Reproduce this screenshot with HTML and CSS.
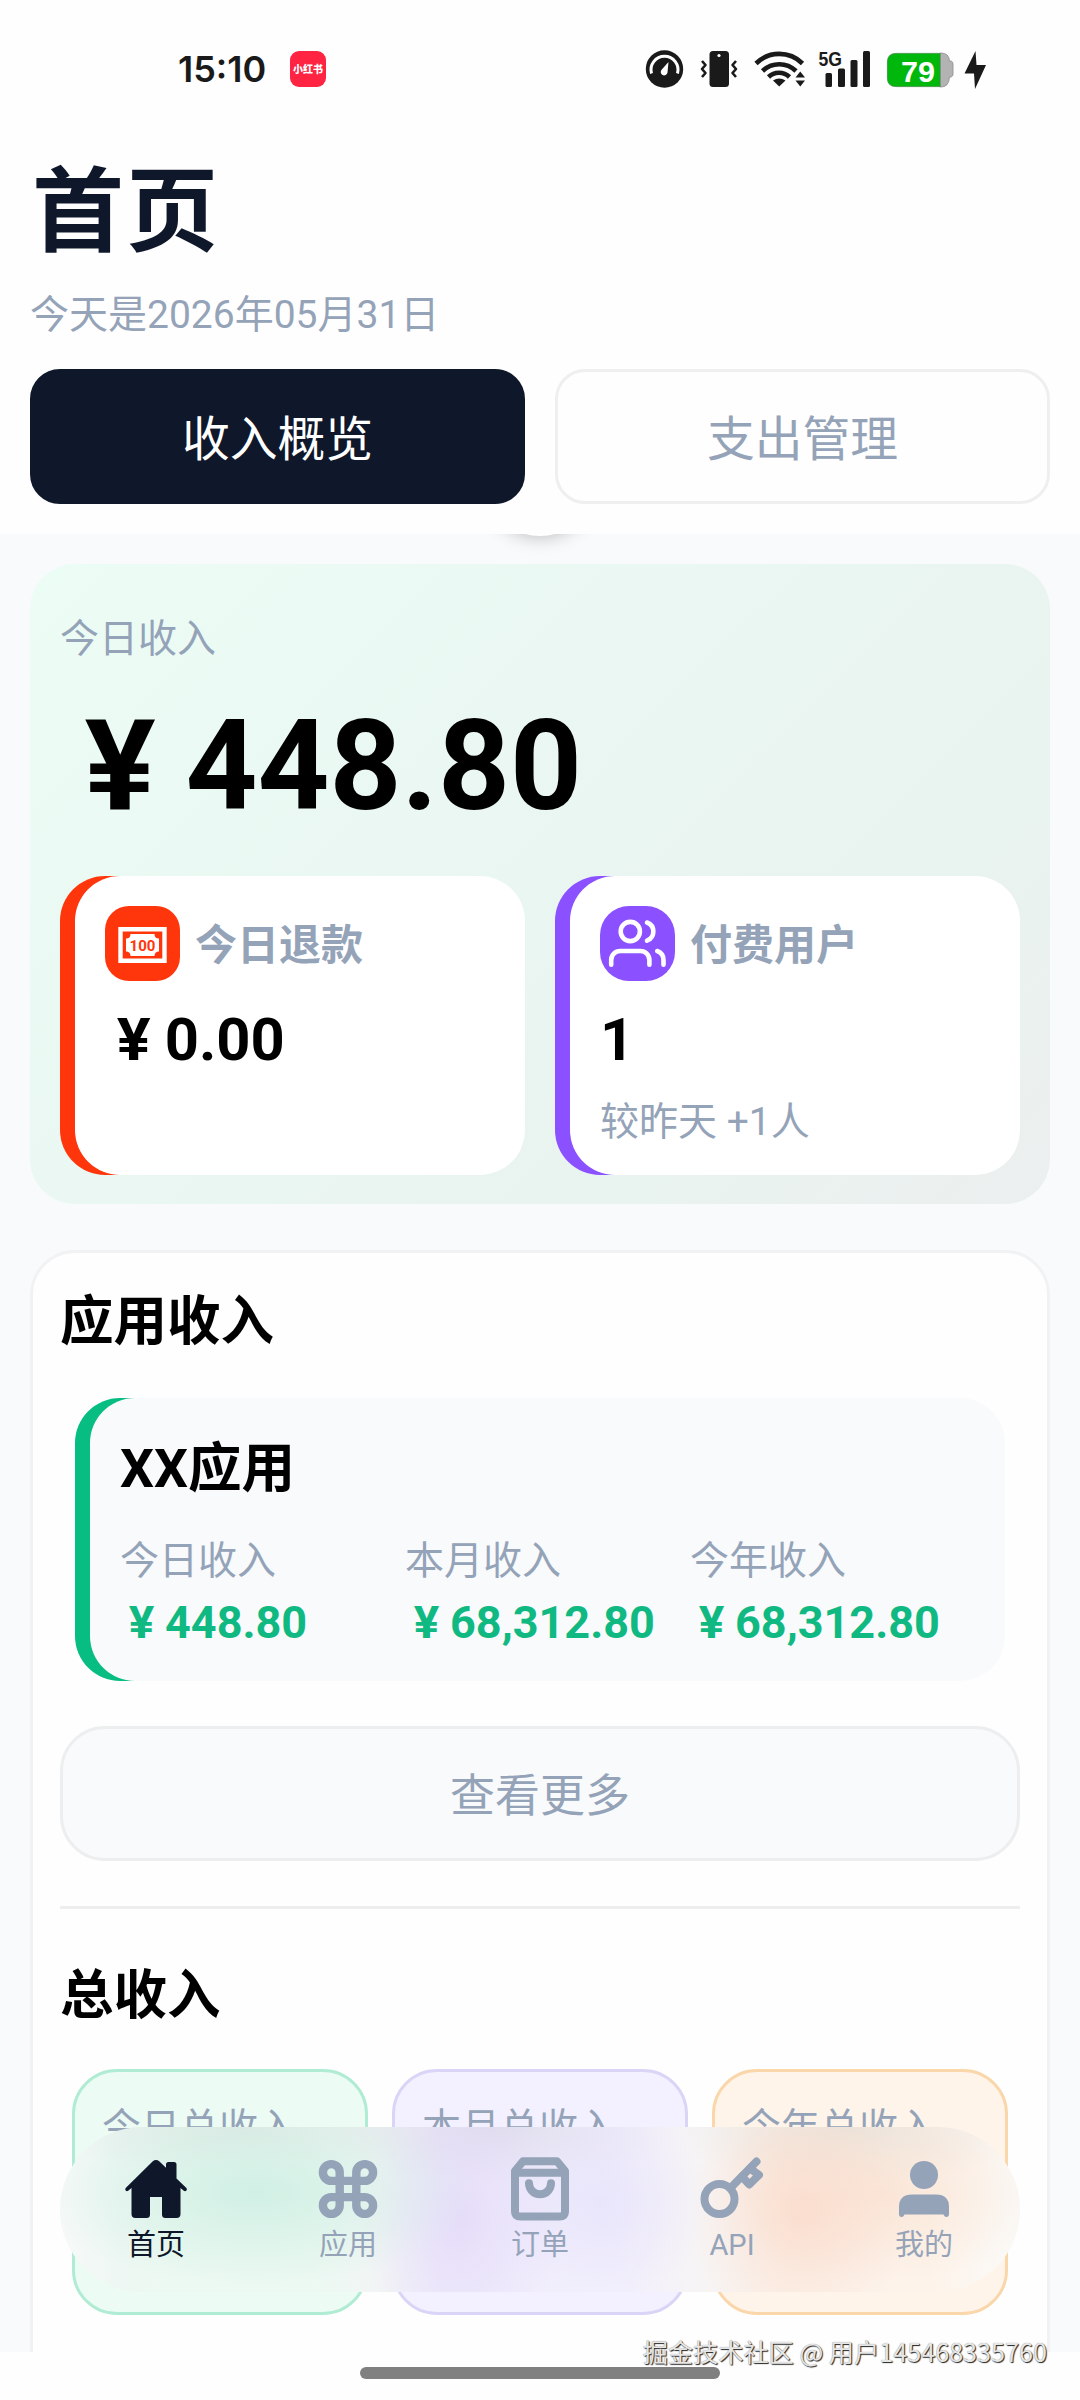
FILE: index.html
```html
<!DOCTYPE html>
<html lang="zh-CN">
<head>
<meta charset="utf-8">
<title>首页</title>
<link rel="stylesheet" href="styles.css">
</head>
<body>
<div class="screen">
  <div class="status">
    <div class="status-left">
      <span class="clock">15:10</span>
      <span class="app-badge">小红书</span>
    </div>
    <svg class="status-icons" width="344" height="60" viewBox="644 39 344 60">
      <g fill="#1a1a1a">
        <circle cx="664.5" cy="69" r="18.7"/>
        <path d="M651.5 73.500A13.500 13.500 0 1 1 677.500 73.500" fill="none" stroke="#fff" stroke-width="3"/>
        <path d="M668.500 62L667.500 72.500A3.400 3.400 0 1 1 661.800 69.500Z" fill="#fff"/>
        <rect x="709.500" y="51" width="19.500" height="36" rx="3.500"/>
        <circle cx="719" cy="55.500" r="1.600" fill="#fff"/>
        <path d="M702 61l3.500 4-3.500 4 3.500 4-3.500 4M736 61l-3.500 4 3.500 4-3.500 4 3.500 4" fill="none" stroke="#1a1a1a" stroke-width="2.600" stroke-linejoin="round"/>
        <g fill="none" stroke="#1a1a1a" stroke-width="4.600">
          <path d="M756 63.500a33 33 0 0 1 46.500 0"/>
          <path d="M762.500 71a24 24 0 0 1 33.500 0"/>
          <path d="M768.500 77a15 15 0 0 1 21 0"/>
        </g>
        <path d="M773 80.500q6-4 12.500 0L779.200 86.500Z"/>
        <path d="M795.500 77.500h9.500l-4.750-6zM795.500 80.500h9.500l-4.750 6z"/>
        <rect x="825.500" y="73" width="6.500" height="14" rx="1.500"/>
        <rect x="838" y="68.500" width="7" height="18.500" rx="1.500"/>
        <rect x="850.500" y="60" width="7" height="27" rx="1.500"/>
        <rect x="863" y="51" width="7" height="36" rx="1.500"/>
        <path d="M975.500 51L964.500 73.500h9.500L975 89 986 65h-9.500z"/>
      </g>
      <text class="net-label" x="818.500" y="65.500" textLength="23.500" lengthAdjust="spacingAndGlyphs">5G</text>
      <path d="M940 53h1q8 0 8.500 8h1.500q2 .5 2 3v10q0 2.500-2 3h-1.500q-.5 10-8.500 10h-1z" fill="#b3b3b3" stroke="#8a8f8a" stroke-width=".8"/>
      <path d="M940 53.400H896q-8.600 0-8.600 8.600v16q0 8.600 8.600 8.600h44z" fill="#00b70b" stroke="#3d8a41" stroke-width=".8"/>
      <text class="charge-label" x="901" y="81.500" textLength="34" lengthAdjust="spacingAndGlyphs">79</text>
    </svg>
  </div>

  <header class="header">
    <h1>首页</h1>
    <p class="date">今天是2026年05月31日</p>
    <div class="tabs">
      <div class="tab active">收入概览</div>
      <div class="tab">支出管理</div>
    </div>
  </header>

  <main class="main">
    <div class="refresh"></div>
    <section class="hero">
      <div class="label">今日收入</div>
      <div class="amount"><span class="yen">¥</span>448.80</div>
      <div class="pair">
        <div class="stat red">
          <div class="stat-body">
            <div class="stat-head">
              <svg class="stat-icon" width="75" height="75" viewBox="0 0 75 75">
                <rect width="75" height="75" rx="24" fill="#ff360b"/>
                <path d="M15.500 23.200h44v31.600h-44z" fill="none" stroke="#fff" stroke-width="4.400"/>
                <path d="M25.500 28h24q0 4.500 4.500 4.500v13q-4.500 0-4.500 4.500h-24q0-4.500-4.500-4.500v-13q4.500 0 4.500-4.500z" fill="#fff"/>
                <text class="note-label" x="37.500" y="44.600" text-anchor="middle">100</text>
              </svg>
              <span>今日退款</span>
            </div>
            <div class="stat-value"><span class="yen">¥</span>0.00</div>
          </div>
        </div>
        <div class="stat violet">
          <div class="stat-body">
            <div class="stat-head">
              <svg class="stat-icon" width="75" height="75" viewBox="0 0 75 75">
                <rect width="75" height="75" rx="29" fill="#8b50ff"/>
                <g fill="none" stroke="#fff" stroke-width="4.600" stroke-linecap="round">
                  <circle cx="30.300" cy="25.500" r="9.600"/>
                  <path d="M11.200 58.700V54a9 9 0 0 1 9-9h20.200a9 9 0 0 1 9 9v4.700"/>
                  <path d="M47 16.500a9.700 9.700 0 0 1 0 18.200"/>
                  <path d="M57.200 45c4 1.500 6.300 5 6.300 9v4.700"/>
                </g>
              </svg>
              <span>付费用户</span>
            </div>
            <div class="stat-value">1</div>
            <div class="stat-note">较昨天 +1人</div>
          </div>
        </div>
      </div>
    </section>

    <section class="panel">
      <h2>应用收入</h2>
      <div class="app">
        <div class="app-body">
          <h3>XX应用</h3>
          <div class="cols">
            <div><div class="label">今日收入</div><div class="money"><span class="yen">¥</span>448.80</div></div>
            <div><div class="label">本月收入</div><div class="money"><span class="yen">¥</span>68,312.80</div></div>
            <div><div class="label">今年收入</div><div class="money"><span class="yen">¥</span>68,312.80</div></div>
          </div>
        </div>
      </div>
      <div class="more">查看更多</div>
      <hr class="divider">
      <h2 class="total-title">总收入</h2>
      <div class="totals">
        <div class="total green">今日总收入</div>
        <div class="total purple">本月总收入</div>
        <div class="total orange">今年总收入</div>
      </div>
    </section>
  </main>

  <nav class="nav">
    <div class="nav-item current">
      <svg width="66" height="66" viewBox="0 0 66 66" fill="#0f172a">
        <path d="M33 4q-1.800 0-3.200 1.300L2.700 32q-1 1.200 0 2.500t2.500.3L8.500 32V58q0 4 4 4h11q3.500 0 3.500-3.500V41h12v17.500q0 3.500 3.500 3.500h11q4 0 4-4V32l3.300 2.800q1.500 1 2.600-.3t0-2.500L53.500 22.500V8.500q0-2.500-2.500-2.500h-5.500Q43 6 43 8.500v3.300L36.200 5.300Q34.800 4 33 4z"/>
      </svg>
      <span>首页</span>
    </div>
    <div class="nav-item">
      <svg width="66" height="66" viewBox="0 0 66 66" fill="none" stroke="#94a3b8" stroke-width="8.400">
        <path d="M24.700 16.500v33a8.400 8.400 0 1 1-8.400-8.400h33.400a8.400 8.400 0 1 1-8.400 8.400v-33a8.400 8.400 0 1 1 8.400 8.400H16.300a8.400 8.400 0 1 1 8.400-8.400z"/>
      </svg>
      <span>应用</span>
    </div>
    <div class="nav-item">
      <svg width="66" height="66" viewBox="0 0 66 66" fill="none" stroke="#94a3b8" stroke-width="8">
        <path d="M8 15v40.500q0 5 5.500 5h39q5.500 0 5.500-5V15L50 5.300H16z" stroke-linejoin="round"/>
        <path d="M8 16.700h50"/>
        <path d="M22 27.300a11 11 0 0 0 22 0" stroke-linecap="round"/>
      </svg>
      <span>订单</span>
    </div>
    <div class="nav-item">
      <svg width="66" height="66" viewBox="0 0 66 66" fill="none" stroke="#94a3b8" stroke-width="8" stroke-linecap="round" stroke-linejoin="round">
        <circle cx="20.500" cy="43" r="15"/>
        <path d="M31.500 32L57.500 5.500"/>
        <path d="M51 12.500L60 19 50.300 28.500 43 20.500"/>
      </svg>
      <span>API</span>
    </div>
    <div class="nav-item">
      <svg width="66" height="66" viewBox="0 0 66 66" fill="#94a3b8">
        <circle cx="33" cy="19" r="14"/>
        <path d="M8 51q0-12.500 13-12.500h24q13 0 13 12.500v7q0 3-2.700 3-1.800 0-2.800-2.500h-39q-1 2.500-2.800 2.500Q8 61 8 58z"/>
      </svg>
      <span>我的</span>
    </div>
  </nav>
  <div class="home-bar"></div>
  <div class="watermark">掘金技术社区 @ 用户145468335760</div>
</div>
</body>
</html>
```
FILE: styles.css
```css
* { box-sizing: border-box; margin: 0; padding: 0; }
body {
  background: #fff;
  font-family: Roboto, "Noto Sans CJK SC", sans-serif;
  font-size: 39px;
  color: #000;
}
h1, h2, h3 { font-weight: 700; }

.screen {
  position: relative;
  width: 1080px;
  height: 2400px;
  display: flex;
  flex-direction: column;
  background: #fefefe;
  overflow: hidden;
}

/* Status bar */
.status {
  height: 138px;
  display: flex;
  align-items: center;
  justify-content: space-between;
  padding: 0 92px 0 178px;
}
.status-left { display: flex; align-items: center; gap: 25px; }
.clock { font: 600 36px/40px Inter, sans-serif; color: #1a1a1a; width: 87px; white-space: nowrap; }
.app-badge {
  width: 36px;
  height: 36px;
  border-radius: 9px;
  background: #fe2442;
  color: #fff;
  font-size: 10px;
  font-weight: 900;
  line-height: 37px;
  text-align: center;
}
.net-label { font: 700 21px "Liberation Sans", sans-serif; fill: #1a1a1a; }
.charge-label { font: 700 30px "Liberation Sans", sans-serif; fill: #fff; }
.note-label { font: 700 15px Roboto, sans-serif; fill: #ff360b; }

/* Header */
.header { padding: 15px 30px 30px; }
h1 { padding-left: 2px; font-size: 92px; letter-spacing: 2px; line-height: 120px; color: #0f172a; }
.date { margin-top: 18px; line-height: 48px; color: #94a3b8; }
.tabs { margin-top: 30px; display: grid; grid-template-columns: 1fr 1fr; gap: 30px; }
.tab {
  height: 135px;
  border: 3px solid #efefef;
  border-radius: 30px;
  font-size: 47.800px;
  line-height: 136px;
  text-align: center;
  color: #94a3b8;
}
.tab.active { background: #0f172a; border-color: #0f172a; color: #fff; }

/* Amounts: the currency sign sits centred in a full-width cell */
.yen { display: inline-block; width: 1em; text-align: center; transform: translateX(-.02em) scaleX(1.06); }

/* Scrolling content */
.main {
  position: relative;
  height: 1818px;
  padding: 30px 30px 0;
  background: #f8fafc;
  overflow: hidden;
}
.refresh {
  position: absolute;
  left: 480px;
  top: -118px;
  width: 120px;
  height: 120px;
  border-radius: 50%;
  background: #fff;
  box-shadow: 0 6px 18px -5px rgba(0, 0, 0, .25);
}
.label { color: #94a3b8; }
.hero {
  position: relative;
  height: 640px;
  padding: 48px 30px 0;
  border-radius: 45px;
  background: linear-gradient(135deg, #ecfdf5 0%, #eaf7f2 40%, #e9f3ef 75%, #ecefef 100%);
}
.hero > .label { line-height: 54px; }
.amount { margin-top: 26px; font-size: 125.500px; font-weight: 700; line-height: 150px; }
.pair { margin-top: 34px; display: grid; grid-template-columns: 1fr 1fr; gap: 30px; }
.stat { height: 299px; padding-left: 15px; border-radius: 45px; }
.stat.red { background: linear-gradient(90deg, #ff360b 120px, transparent 120px); }
.stat.violet { background: linear-gradient(90deg, #8b50ff 120px, transparent 120px); }
.stat-body { height: 100%; padding: 30px; border-radius: 45px; background: #fff; }
.stat-head {
  display: flex;
  align-items: center;
  gap: 15px;
  height: 75px;
  font-size: 42px;
  font-weight: 700;
  line-height: 75px;
  color: #94a3b8;
}
.stat-head span { padding-top: 4px; }
.stat-value { margin-top: 24px; font-size: 59.700px; font-weight: 700; line-height: 70px; }
.stat-note { margin-top: 24px; line-height: 46px; color: #94a3b8; }

.panel {
  margin-top: 46px;
  padding: 34px 27px 120px;
  border: 3px solid #f0f2f4;
  border-radius: 45px;
  background: #fefefe;
}
h2, h3 { font-size: 53.500px; line-height: 70px; }
.app {
  height: 283px;
  margin: 41px 15px 0;
  padding-left: 15px;
  border-radius: 45px;
  background: linear-gradient(90deg, #07bd81 120px, transparent 120px);
}
.app-body { height: 100%; padding: 36px 30px 0; border-radius: 45px; background: #f8fafc; }
.cols { margin-top: 32px; display: grid; grid-template-columns: repeat(3, 285px); line-height: 50px; }
.money { margin-top: 12px; font-size: 45px; font-weight: 700; color: #10b981; white-space: nowrap; }
.more {
  height: 135px;
  margin-top: 45px;
  border: 3px solid #eceef0;
  border-radius: 45px;
  background: #f8fafc;
  font-size: 45px;
  line-height: 135px;
  text-align: center;
  color: #94a3b8;
}
.divider { height: 3px; margin-top: 45px; border: 0; background: #eee; }
.total-title { margin-top: 52px; }
.totals { margin: 38px 12px 0; display: grid; grid-template-columns: repeat(3, 1fr); gap: 24px; }
.total {
  height: 246px;
  padding: 31px 27px;
  border: 3px solid;
  border-radius: 45px;
  line-height: 50px;
  white-space: nowrap;
}
.total.green { background: #ecfbf3; border-color: #b0ecd4; }
.total.purple { background: #f3f0ff; border-color: #dad5f6; }
.total.orange { background: #fff4ea; border-color: #fad6ab; }
.totals .total { color: #94a3b8; }

/* Floating navigation */
.nav {
  position: absolute;
  left: 60px;
  top: 2127px;
  width: 960px;
  height: 165px;
  padding-top: 30px;
  display: grid;
  grid-template-columns: repeat(5, 1fr);
  border-radius: 83px;
  background:
    radial-gradient(220px 95px at 195px 65px, rgba(204, 238, 226, .85), rgba(204, 238, 226, 0)),
    radial-gradient(100px 150px at 400px 90px, rgba(224, 212, 248, .65), rgba(224, 212, 248, 0)),
    radial-gradient(110px 100px at 540px 75px, rgba(229, 225, 250, .7), rgba(229, 225, 250, 0)),
    radial-gradient(110px 130px at 740px 85px, rgba(250, 214, 196, .65), rgba(250, 214, 196, 0)),
    radial-gradient(170px 90px at 820px 65px, rgba(248, 222, 204, .6), rgba(248, 222, 204, 0)),
    radial-gradient(190px 50px at 180px 0, rgba(214, 224, 220, .65), rgba(214, 224, 220, 0)),
    radial-gradient(180px 60px at 440px 0, rgba(216, 215, 228, .65), rgba(216, 215, 228, 0)),
    radial-gradient(180px 60px at 790px 0, rgba(221, 221, 216, .65), rgba(221, 221, 216, 0)),
    linear-gradient(90deg, #f7f9f8 0, #eef7f3 60px, #ecf9f2 110px, #ecf9f2 250px, #f2f5f5 320px, #f0edfb 380px, #f2effd 560px, #f6f4f6 630px, #fbf3ec 720px, #fdf3ea 870px, #fbf9f6 945px);
}
.nav-item { display: flex; flex-direction: column; align-items: center; font-size: 29px; line-height: 34px; color: #94a3b8; }
.nav-item svg { display: block; margin-top: -1px; }
.nav-item span { margin-top: 6px; }
.nav-item.current { color: #0f172a; }

.home-bar {
  position: absolute;
  left: 360px;
  top: 2367px;
  width: 360px;
  height: 12px;
  border-radius: 6px;
  background: #808080;
}
.watermark {
  position: absolute;
  right: 33px;
  top: 2333px;
  font: 400 25.200px/36px "Noto Sans CJK SC", sans-serif;
  color: #e6e6e6;
  text-shadow: 1px 1px 1px #222, 0 0 1px #888;
  white-space: nowrap;
}
```
